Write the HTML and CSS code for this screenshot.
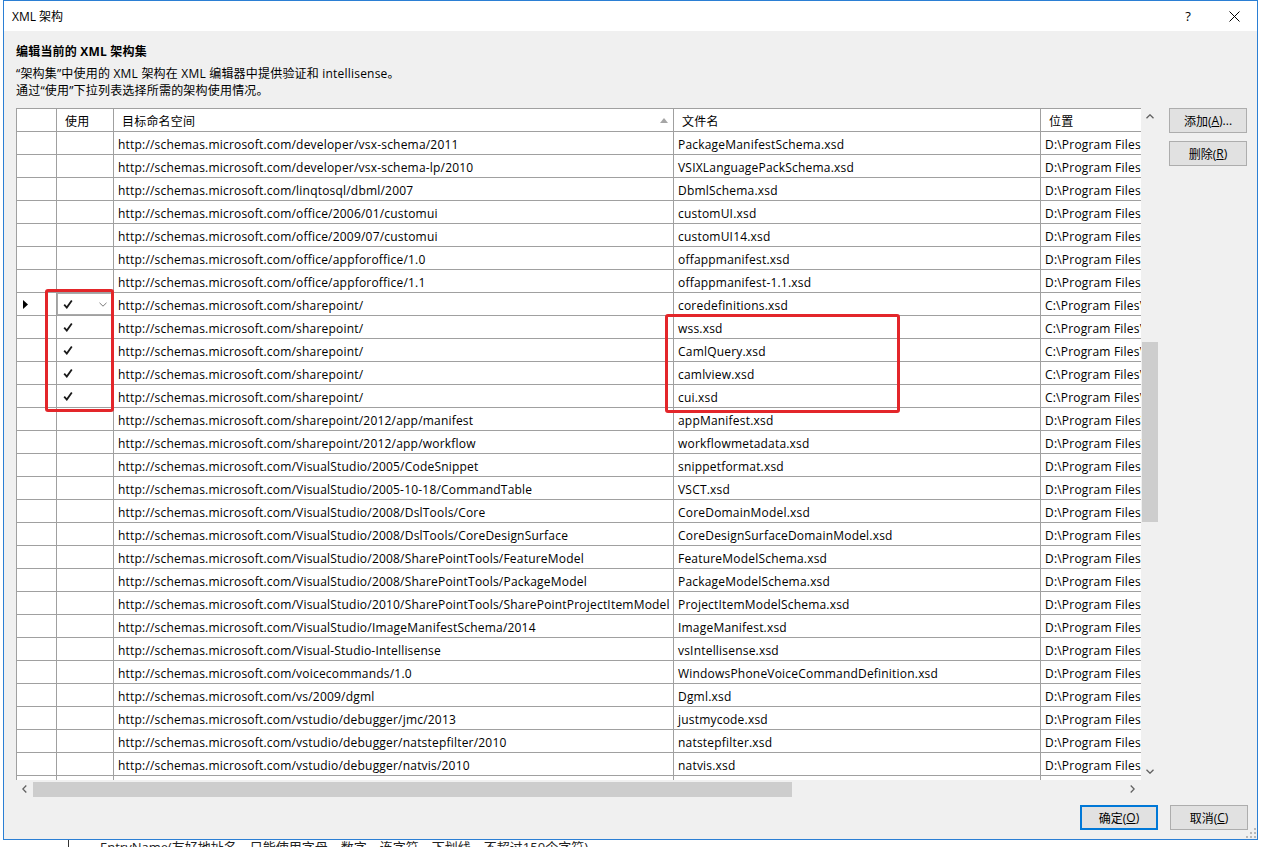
FILE: index.html
```html
<!DOCTYPE html>
<html lang="zh-CN">
<head>
<meta charset="utf-8">
<title>XML 架构</title>
<link rel="stylesheet" href="styles.css">
</head>
<body>
<div class="screen">
  <div class="dialog">
    <div class="titlebar">
      <span class="title">XML 架构</span>
      <span class="cap-btn help">?</span>
      <span class="cap-btn close"><svg width="11" height="11" viewBox="0 0 11 11"><path d="M0.5 0.5 L10.5 10.5 M10.5 0.5 L0.5 10.5" stroke="#000" stroke-width="1" fill="none"/></svg></span>
    </div>
    <div class="content">
      <div class="heading">编辑当前的 XML 架构集</div>
      <div class="desc">“架构集”中使用的 XML 架构在 XML 编辑器中提供验证和 intellisense。<br>通过“使用”下拉列表选择所需的架构使用情况。</div>
      <div class="main">
        <div class="grid">
          <div class="table">
            <div class="row head">
              <div class="cell rh"></div>
              <div class="cell hc">使用</div>
              <div class="cell hc sorted">目标命名空间<svg class="sort" width="8" height="5" viewBox="0 0 8 5"><path d="M0 5 L4 0 L8 5 Z" fill="#a6a6a6"/></svg></div>
              <div class="cell hc">文件名</div>
              <div class="cell hc last">位置</div>
            </div>
            <div class="row"><div class="cell rh"></div><div class="cell use"></div><div class="cell">http://schemas.microsoft.com/developer/vsx-schema/2011</div><div class="cell">PackageManifestSchema.xsd</div><div class="cell last">D:\Program Files</div></div>
            <div class="row"><div class="cell rh"></div><div class="cell use"></div><div class="cell">http://schemas.microsoft.com/developer/vsx-schema-lp/2010</div><div class="cell">VSIXLanguagePackSchema.xsd</div><div class="cell last">D:\Program Files</div></div>
            <div class="row"><div class="cell rh"></div><div class="cell use"></div><div class="cell">http://schemas.microsoft.com/linqtosql/dbml/2007</div><div class="cell">DbmlSchema.xsd</div><div class="cell last">D:\Program Files</div></div>
            <div class="row"><div class="cell rh"></div><div class="cell use"></div><div class="cell">http://schemas.microsoft.com/office/2006/01/customui</div><div class="cell">customUI.xsd</div><div class="cell last">D:\Program Files</div></div>
            <div class="row"><div class="cell rh"></div><div class="cell use"></div><div class="cell">http://schemas.microsoft.com/office/2009/07/customui</div><div class="cell">customUI14.xsd</div><div class="cell last">D:\Program Files</div></div>
            <div class="row"><div class="cell rh"></div><div class="cell use"></div><div class="cell">http://schemas.microsoft.com/office/appforoffice/1.0</div><div class="cell">offappmanifest.xsd</div><div class="cell last">D:\Program Files</div></div>
            <div class="row"><div class="cell rh"></div><div class="cell use"></div><div class="cell">http://schemas.microsoft.com/office/appforoffice/1.1</div><div class="cell">offappmanifest-1.1.xsd</div><div class="cell last">D:\Program Files</div></div>
            <div class="row current"><div class="cell rh"><svg width="5" height="9" viewBox="0 0 5 9"><path d="M0 0 L5 4.5 L0 9 Z" fill="#000"/></svg></div><div class="cell use"><span class="combo"><svg class="chk" width="10" height="10" viewBox="0 0 10 10"><path d="M1.2 5.6 L3.8 8.6 L8.8 1.4" stroke="#1a1a1a" stroke-width="1.8" fill="none"/></svg><svg class="drop" width="8" height="5" viewBox="0 0 8 5"><path d="M0.5 0.8 L4 4.2 L7.5 0.8" stroke="#7a7a7a" stroke-width="1" fill="none"/></svg></span></div><div class="cell">http://schemas.microsoft.com/sharepoint/</div><div class="cell">coredefinitions.xsd</div><div class="cell last">C:\Program Files\</div></div>
            <div class="row"><div class="cell rh"></div><div class="cell use"><svg class="chk" width="10" height="10" viewBox="0 0 10 10"><path d="M1.2 5.6 L3.8 8.6 L8.8 1.4" stroke="#1a1a1a" stroke-width="1.8" fill="none"/></svg></div><div class="cell">http://schemas.microsoft.com/sharepoint/</div><div class="cell">wss.xsd</div><div class="cell last">C:\Program Files\</div></div>
            <div class="row"><div class="cell rh"></div><div class="cell use"><svg class="chk" width="10" height="10" viewBox="0 0 10 10"><path d="M1.2 5.6 L3.8 8.6 L8.8 1.4" stroke="#1a1a1a" stroke-width="1.8" fill="none"/></svg></div><div class="cell">http://schemas.microsoft.com/sharepoint/</div><div class="cell">CamlQuery.xsd</div><div class="cell last">C:\Program Files\</div></div>
            <div class="row"><div class="cell rh"></div><div class="cell use"><svg class="chk" width="10" height="10" viewBox="0 0 10 10"><path d="M1.2 5.6 L3.8 8.6 L8.8 1.4" stroke="#1a1a1a" stroke-width="1.8" fill="none"/></svg></div><div class="cell">http://schemas.microsoft.com/sharepoint/</div><div class="cell">camlview.xsd</div><div class="cell last">C:\Program Files\</div></div>
            <div class="row"><div class="cell rh"></div><div class="cell use"><svg class="chk" width="10" height="10" viewBox="0 0 10 10"><path d="M1.2 5.6 L3.8 8.6 L8.8 1.4" stroke="#1a1a1a" stroke-width="1.8" fill="none"/></svg></div><div class="cell">http://schemas.microsoft.com/sharepoint/</div><div class="cell">cui.xsd</div><div class="cell last">C:\Program Files\</div></div>
            <div class="row"><div class="cell rh"></div><div class="cell use"></div><div class="cell">http://schemas.microsoft.com/sharepoint/2012/app/manifest</div><div class="cell">appManifest.xsd</div><div class="cell last">D:\Program Files\</div></div>
            <div class="row"><div class="cell rh"></div><div class="cell use"></div><div class="cell">http://schemas.microsoft.com/sharepoint/2012/app/workflow</div><div class="cell">workflowmetadata.xsd</div><div class="cell last">D:\Program Files\</div></div>
            <div class="row"><div class="cell rh"></div><div class="cell use"></div><div class="cell">http://schemas.microsoft.com/VisualStudio/2005/CodeSnippet</div><div class="cell">snippetformat.xsd</div><div class="cell last">D:\Program Files</div></div>
            <div class="row"><div class="cell rh"></div><div class="cell use"></div><div class="cell">http://schemas.microsoft.com/VisualStudio/2005-10-18/CommandTable</div><div class="cell">VSCT.xsd</div><div class="cell last">D:\Program Files</div></div>
            <div class="row"><div class="cell rh"></div><div class="cell use"></div><div class="cell">http://schemas.microsoft.com/VisualStudio/2008/DslTools/Core</div><div class="cell">CoreDomainModel.xsd</div><div class="cell last">D:\Program Files</div></div>
            <div class="row"><div class="cell rh"></div><div class="cell use"></div><div class="cell">http://schemas.microsoft.com/VisualStudio/2008/DslTools/CoreDesignSurface</div><div class="cell">CoreDesignSurfaceDomainModel.xsd</div><div class="cell last">D:\Program Files</div></div>
            <div class="row"><div class="cell rh"></div><div class="cell use"></div><div class="cell">http://schemas.microsoft.com/VisualStudio/2008/SharePointTools/FeatureModel</div><div class="cell">FeatureModelSchema.xsd</div><div class="cell last">D:\Program Files</div></div>
            <div class="row"><div class="cell rh"></div><div class="cell use"></div><div class="cell">http://schemas.microsoft.com/VisualStudio/2008/SharePointTools/PackageModel</div><div class="cell">PackageModelSchema.xsd</div><div class="cell last">D:\Program Files</div></div>
            <div class="row"><div class="cell rh"></div><div class="cell use"></div><div class="cell">http://schemas.microsoft.com/VisualStudio/2010/SharePointTools/SharePointProjectItemModel</div><div class="cell">ProjectItemModelSchema.xsd</div><div class="cell last">D:\Program Files</div></div>
            <div class="row"><div class="cell rh"></div><div class="cell use"></div><div class="cell">http://schemas.microsoft.com/VisualStudio/ImageManifestSchema/2014</div><div class="cell">ImageManifest.xsd</div><div class="cell last">D:\Program Files</div></div>
            <div class="row"><div class="cell rh"></div><div class="cell use"></div><div class="cell">http://schemas.microsoft.com/Visual-Studio-Intellisense</div><div class="cell">vsIntellisense.xsd</div><div class="cell last">D:\Program Files</div></div>
            <div class="row"><div class="cell rh"></div><div class="cell use"></div><div class="cell">http://schemas.microsoft.com/voicecommands/1.0</div><div class="cell">WindowsPhoneVoiceCommandDefinition.xsd</div><div class="cell last">D:\Program Files</div></div>
            <div class="row"><div class="cell rh"></div><div class="cell use"></div><div class="cell">http://schemas.microsoft.com/vs/2009/dgml</div><div class="cell">Dgml.xsd</div><div class="cell last">D:\Program Files</div></div>
            <div class="row"><div class="cell rh"></div><div class="cell use"></div><div class="cell">http://schemas.microsoft.com/vstudio/debugger/jmc/2013</div><div class="cell">justmycode.xsd</div><div class="cell last">D:\Program Files</div></div>
            <div class="row"><div class="cell rh"></div><div class="cell use"></div><div class="cell">http://schemas.microsoft.com/vstudio/debugger/natstepfilter/2010</div><div class="cell">natstepfilter.xsd</div><div class="cell last">D:\Program Files</div></div>
            <div class="row"><div class="cell rh"></div><div class="cell use"></div><div class="cell">http://schemas.microsoft.com/vstudio/debugger/natvis/2010</div><div class="cell">natvis.xsd</div><div class="cell last">D:\Program Files</div></div>
            <div class="row"><div class="cell rh"></div><div class="cell use"></div><div class="cell"></div><div class="cell"></div><div class="cell last"></div></div>
          </div>
          <div class="vscroll">
            <div class="arrow"><svg width="8" height="5" viewBox="0 0 8 5"><path d="M0.5 4.3 L4 0.8 L7.5 4.3" stroke="#606060" stroke-width="1.3" fill="none"/></svg></div>
            <div class="vtrack"><div class="vthumb"></div></div>
            <div class="arrow"><svg width="8" height="5" viewBox="0 0 8 5"><path d="M0.5 0.7 L4 4.2 L7.5 0.7" stroke="#606060" stroke-width="1.3" fill="none"/></svg></div>
          </div>
          <div class="hscroll">
            <div class="arrow"><svg width="5" height="8" viewBox="0 0 5 8"><path d="M4.3 0.5 L0.8 4 L4.3 7.5" stroke="#606060" stroke-width="1.3" fill="none"/></svg></div>
            <div class="htrack"><div class="hthumb"></div></div>
            <div class="arrow"><svg width="5" height="8" viewBox="0 0 5 8"><path d="M0.7 0.5 L4.2 4 L0.7 7.5" stroke="#606060" stroke-width="1.3" fill="none"/></svg></div>
          </div>
          <div class="corner"></div>
        </div>
        <div class="side-buttons">
          <div class="btn">添加(<u>A</u>)...</div>
          <div class="btn">删除(<u>R</u>)</div>
        </div>
      </div>
      <div class="footer-buttons">
        <div class="btn default">确定(<u>O</u>)</div>
        <div class="btn">取消(<u>C</u>)</div>
      </div>
      <div class="grip"><svg width="10" height="10" viewBox="0 0 10 10"><g fill="#b8b8b8"><rect x="8" y="0" width="2" height="2"/><rect x="4" y="4" width="2" height="2"/><rect x="8" y="4" width="2" height="2"/><rect x="0" y="8" width="2" height="2"/><rect x="4" y="8" width="2" height="2"/><rect x="8" y="8" width="2" height="2"/></g></svg></div>
    </div>
  </div>
  <div class="backdrop">
    <div class="bd-line"></div>
    <div class="bd-text">EntryName(友好地址名，只能使用字母、数字、连字符、下划线，不超过150个字符)</div>
  </div>
  <div class="mark mark-use"></div>
  <div class="mark mark-files"></div>
</div>
</body>
</html>
```

FILE: styles.css
```css
* { box-sizing: border-box; }
html, body { margin: 0; padding: 0; }
body {
  width: 1262px;
  height: 847px;
  overflow: hidden;
  background: #ffffff;
  font-family: "Open Sans", "Noto Sans CJK SC", sans-serif;
  font-size: 12px;
  color: #000;
}
.screen {
  position: relative;
  width: 1262px;
  height: 847px;
  display: flex;
  flex-direction: column;
}
.dialog {
  flex: none;
  margin-left: 3px;
  width: 1255px;
  height: 840px;
  border: 1px solid #2b7fd4;
  display: flex;
  flex-direction: column;
  background: #f0f0f0;
}
.titlebar {
  flex: none;
  height: 30px;
  background: #fff;
  display: flex;
  align-items: center;
  padding-left: 8px;
}
.title { flex: 1; font-size: 12px; padding-bottom: 1px; }
.cap-btn {
  width: 46px;
  height: 30px;
  display: flex;
  align-items: center;
  justify-content: center;
  font-size: 13px;
}
.content {
  flex: 1;
  position: relative;
  padding: 12px 9px 9px 12px;
  display: flex;
  flex-direction: column;
}
.heading { font-weight: bold; line-height: 17px; height: 17px; letter-spacing: 0.2px; }
.desc { margin-top: 5px; line-height: 17px; letter-spacing: 0.2px; }
.main {
  margin-top: 9px;
  display: flex;
  gap: 11px;
  align-items: flex-start;
}
.grid {
  display: grid;
  grid-template-columns: 1125px 17px;
  grid-template-rows: 672px 17px;
  width: 1142px;
}
.table {
  background: #fff;
  border-left: 1px solid #a0a0a0;
  border-top: 1px solid #a0a0a0;
  overflow: hidden;
}
.row {
  display: grid;
  grid-template-columns: 40px 57px 560px 367px 100px;
  height: 23px;
}
.cell {
  border-right: 1px solid #a0a0a0;
  border-bottom: 1px solid #a0a0a0;
  padding: 2px 4px 0 4px;
  line-height: 22px;
  letter-spacing: 0.2px;
  white-space: nowrap;
  overflow: hidden;
}
.cell.last { border-right: none; padding-right: 0; }
.cell.hc { padding-left: 8px; }
.cell.sorted { position: relative; }
.sort { position: absolute; right: 5px; top: 9px; }
.cell.rh {
  padding: 0 0 0 6px;
  display: flex;
  align-items: center;
}
.cell.use {
  padding: 0 0 0 6px;
  display: flex;
  align-items: center;
}
.combo {
  margin-left: -6px;
  width: 56px;
  height: 22px;
  border: 1px solid #a9a9a9;
  display: flex;
  align-items: center;
  padding-left: 5px;
}
.combo .drop { margin-left: auto; margin-right: 5px; }
.vscroll {
  background: #f0f0f0;
  display: flex;
  flex-direction: column;
}
.vscroll .arrow {
  height: 17px;
  display: flex;
  align-items: center;
  justify-content: center;
  flex: none;
}
.vtrack { flex: 1; padding-top: 217px; padding-left: 1px; }
.vthumb { height: 180px; background: #cdcdcd; }
.hscroll {
  background: #f0f0f0;
  display: flex;
}
.hscroll .arrow {
  width: 17px;
  display: flex;
  align-items: center;
  justify-content: center;
  flex: none;
}
.htrack { flex: 1; padding-top: 2px; }
.hthumb { width: 759px; height: 15px; background: #cdcdcd; }
.corner { background: #f0f0f0; }
.side-buttons {
  display: flex;
  flex-direction: column;
  gap: 8px;
}
.btn {
  width: 78px;
  height: 25px;
  background: #e1e1e1;
  border: 1px solid #adadad;
  display: flex;
  align-items: center;
  justify-content: center;
  font-size: 12px;
}
.btn u { text-decoration: underline; }
.btn.default { border: 2px solid #0078d7; }
.footer-buttons {
  margin-top: 8px;
  display: flex;
  justify-content: flex-end;
  gap: 12px;
}
.grip { position: absolute; right: 1px; bottom: 1px; line-height: 0; }
.backdrop {
  flex: 1;
  display: flex;
  position: relative;
}
.bd-line { width: 1px; margin-left: 68px; background: #333; }
.bd-text {
  margin-left: 31px;
  margin-top: -2px;
  font-size: 13px;
  line-height: 18px;
  white-space: nowrap;
  color: #222;
}
.mark {
  position: absolute;
  border: 3px solid #e3262a;
  border-radius: 3px;
}
.mark-use { left: 45px; top: 289px; width: 69px; height: 123px; }
.mark-files { left: 665px; top: 314px; width: 235px; height: 99px; }
```
